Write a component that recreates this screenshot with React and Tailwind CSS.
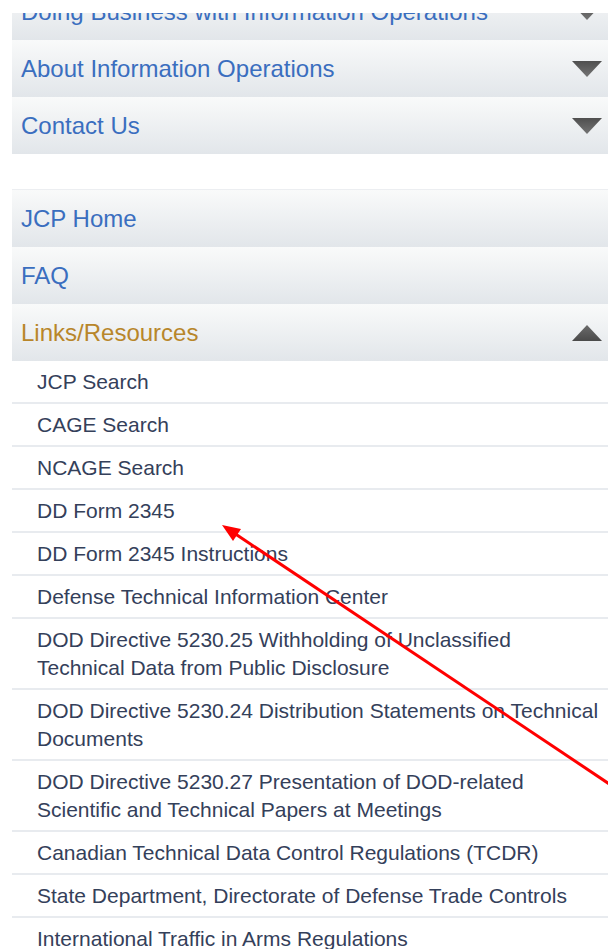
import React from "react";

const mainTop = ["About Information Operations", "Contact Us"];

const resources = [
  "JCP Search",
  "CAGE Search",
  "NCAGE Search",
  "DD Form 2345",
  "DD Form 2345 Instructions",
  "Defense Technical Information Center",
  "DOD Directive 5230.25 Withholding of Unclassified Technical Data from Public Disclosure",
  "DOD Directive 5230.24 Distribution Statements on Technical Documents",
  "DOD Directive 5230.27 Presentation of DOD-related Scientific and Technical Papers at Meetings",
  "Canadian Technical Data Control Regulations (TCDR)",
  "State Department, Directorate of Defense Trade Controls",
  "International Traffic in Arms Regulations",
];

function Caret({ up }) {
  return (
    <svg width="30" height="16" viewBox="0 0 30 16" className="shrink-0">
      <defs>
        <linearGradient id={up ? "cu" : "cd"} x1="0" y1="0" x2="0" y2="1">
          <stop offset="0" stopColor={up ? "#6b6b6b" : "#4f4f4f"} />
          <stop offset="1" stopColor={up ? "#4a4a4a" : "#747474"} />
        </linearGradient>
      </defs>
      <polygon
        points={up ? "15,0 30,16 0,16" : "0,0 30,0 15,16"}
        fill={`url(#${up ? "cu" : "cd"})`}
      />
    </svg>
  );
}

function NavRow({ label, caret, active }) {
  return (
    <a
      href="#"
      className={`flex h-[57px] items-center justify-between bg-gradient-to-b from-[#f9fafa] to-[#e2e6ea] pl-[9px] pr-[6px] text-[24px] ${
        active ? "text-[#b8862a]" : "text-[#3a6ebf]"
      }`}
    >
      <span>{label}</span>
      {caret && <Caret up={caret === "up"} />}
    </a>
  );
}

export default function App() {
  return (
    <div
      className="relative h-[949px] w-[608px] overflow-hidden bg-white pt-[13px]"
      style={{ fontFamily: '"Liberation Sans", Arial, sans-serif' }}
    >
      <div className="ml-[12px]">
        {/* first row is scrolled up under the header */}
        <div className="flex h-[27px] flex-col justify-end overflow-hidden">
          <div className="shrink-0">
            <NavRow label="Doing Business with Information Operations" caret="down" />
          </div>
        </div>
        {mainTop.map((l) => (
          <NavRow key={l} label={l} caret="down" />
        ))}

        <div className="mt-[35px] border-t border-[#eceef1]">
          <NavRow label="JCP Home" />
          <NavRow label="FAQ" />
          <NavRow label="Links/Resources" caret="up" active />
        </div>

        <ul>
          {resources.map((r) => (
            <li
              key={r}
              className="border-b-2 border-[#e8ebef] pb-[6px] pl-[25px] pr-[5px] pt-[7px] text-[21px] leading-[28px] text-[#34405a]"
            >
              <a href="#">{r}</a>
            </li>
          ))}
        </ul>
      </div>

      {/* red pointer arrow */}
      <svg
        className="pointer-events-none absolute left-0 top-0"
        width="608"
        height="949"
        viewBox="0 0 608 949"
      >
        <line x1="234" y1="533" x2="720" y2="858" stroke="#ff0000" strokeWidth="3" />
        <polygon points="222,525 233,541 241,529" fill="#ff0000" />
      </svg>
    </div>
  );
}
